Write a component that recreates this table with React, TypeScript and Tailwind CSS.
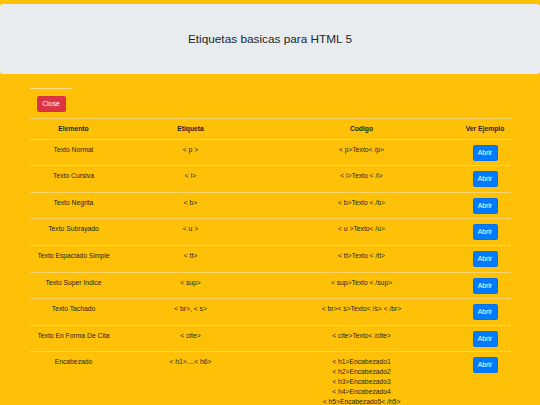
import React from "react";

const rows = [
  { elemento: "Texto Normal", etiqueta: "< p >", codigo: ["< p>Texto< /p>"] },
  { elemento: "Texto Cursiva", etiqueta: "< i>", codigo: ["< i>Texto < /i>"] },
  { elemento: "Texto Negrita", etiqueta: "< b>", codigo: ["< b>Texto < /b>"] },
  { elemento: "Texto Subrayado", etiqueta: "< u >", codigo: ["< u >Texto< /u>"] },
  { elemento: "Texto Espaciado Simple", etiqueta: "< tt>", codigo: ["< tt>Texto < /tt>"] },
  { elemento: "Texto Super Indice", etiqueta: "< sup>", codigo: ["< sup>Texto < /sup>"] },
  { elemento: "Texto Tachado", etiqueta: "< br>, < s>", codigo: ["< br>< s>Texto< /s> < /br>"] },
  { elemento: "Texto En Forma De Cita", etiqueta: "< cite>", codigo: ["< cite>Texto< /cite>"] },
  {
    elemento: "Encabezado",
    etiqueta: "< h1>....< h6>",
    codigo: [
      "< h1>Encabezado1",
      "< h2>Encabezado2",
      "< h3>Encabezado3",
      "< h4>Encabezado4",
      "< h5>Encabezado5< /h5>",
      "< h6>Encabezado6< /h6>"
    ]
  }
];

export default function App() {
  return (
    <div className="min-h-screen bg-[#ffc107] pt-[4px] font-['Liberation_Sans',Arial,sans-serif] text-[#212529]">
      {/* Jumbotron */}
      <div className="h-[70px] rounded-[3px] bg-[#e9ecef] flex items-center justify-center">
        <h1 className="text-[11.8px] leading-[14px] font-normal text-[#212529]">
          Etiquetas basicas para HTML 5
        </h1>
      </div>

      <div className="w-[481px] mx-auto mt-[13.5px]">
        <div className="w-[42px] h-px bg-[#fbdf86]" />
        <button className="mt-[7.5px] ml-[7px] h-[16px] px-[5px] rounded-[2px] bg-[#dc3545] border border-[#d9303f] text-white text-[6.75px] leading-[10px]">
          Close
        </button>

        <table className="mt-[5px] w-full table-fixed border-collapse text-[6.75px] leading-[10px] text-center">
          <colgroup>
            <col className="w-[88px]" />
            <col className="w-[146px]" />
            <col className="w-[196px]" />
            <col className="w-[51px]" />
          </colgroup>
          <thead>
            <tr className="border-t border-b border-[#f7d56c]">
              <th className="pt-[5px] pb-[4.6px] font-bold">Elemento</th>
              <th className="pt-[5px] pb-[4.6px] font-bold">Etiqueta</th>
              <th className="pt-[5px] pb-[4.6px] font-bold">Codigo</th>
              <th className="pt-[5px] pb-[4.6px] font-bold">Ver Ejemplo</th>
            </tr>
          </thead>
          <tbody>
            {rows.map((row, i) => (
              <tr key={i} className="border-t border-[#f7d56c] align-top">
                <td className="pt-[5px] pb-[4.6px]">{row.elemento}</td>
                <td className="pt-[5px] pb-[4.6px]">{row.etiqueta}</td>
                <td className="pt-[5px] pb-[4.6px]">
                  {row.codigo.map((line, j) => (
                    <div key={j}>{line}</div>
                  ))}
                </td>
                <td className="pt-[5px] pb-[4.6px]">
                  <button className="h-[16px] w-[25px] rounded-[2px] bg-[#007bff] border border-[#0a72e6] text-white text-[6.75px] leading-[10px]">
                    Abrir
                  </button>
                </td>
              </tr>
            ))}
          </tbody>
        </table>
      </div>
    </div>
  );
}
